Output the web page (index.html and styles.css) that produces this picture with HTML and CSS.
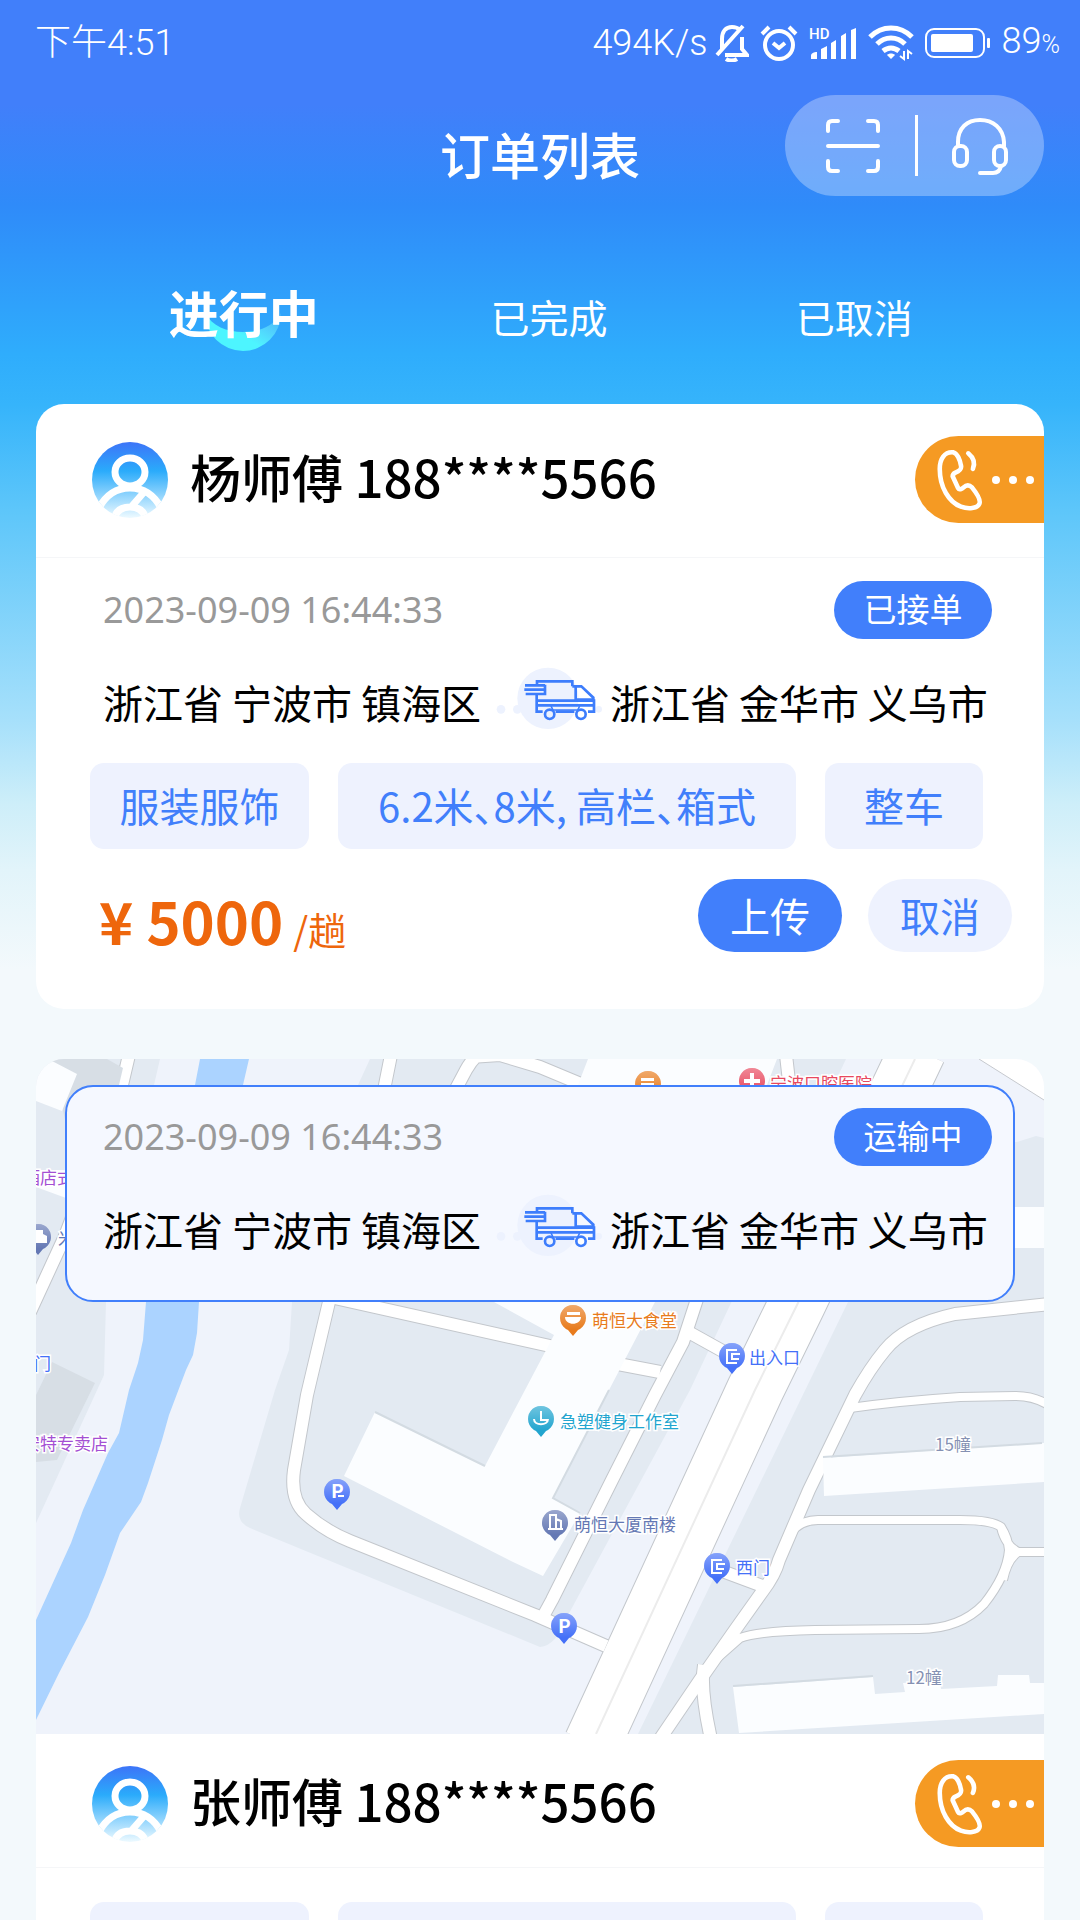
FILE: index.html
```html
<!DOCTYPE html>
<html lang="zh-CN">

<head>
  <meta charset="UTF-8">
  <meta name="viewport" content="width=device-width, initial-scale=1.0">
  <title>订单列表</title>
  <link rel="stylesheet" href="styles.css">
</head>

<body>
  <!-- shared icons -->
  <svg class="sprite" aria-hidden="true">
    <defs>
      <linearGradient id="avatar-fill" x1="0" y1="0" x2="0" y2="1">
        <stop offset="0" stop-color="#3d74f8"/>
        <stop offset=".38" stop-color="#2aabfb"/>
        <stop offset="1" stop-color="#eefaff"/>
      </linearGradient>
      <linearGradient id="pin-shine" x1="0" y1="0" x2="0" y2="1">
        <stop offset="0" stop-color="#fff" stop-opacity=".35"/>
        <stop offset=".8" stop-color="#fff" stop-opacity="0"/>
      </linearGradient>
      <clipPath id="avatar-clip"><circle cx="38" cy="38" r="38"/></clipPath>
    </defs>
    <symbol id="icon-avatar" viewBox="0 0 76 76">
      <circle cx="38" cy="38" r="38" fill="url(#avatar-fill)"/>
      <g fill="none" stroke="#fff" stroke-width="7" clip-path="url(#avatar-clip)">
        <ellipse cx="38" cy="30" rx="15" ry="14"/>
        <path d="M7 66C15 51 26 46 38 46s23 5 31 20"/>
        <path d="M53 49L40 64M22 82c0-12 6-17 16-17s16 5 16 17"/>
      </g>
    </symbol>
    <symbol id="icon-phone" viewBox="0 0 50 66">
      <g fill="none" stroke="#fff" stroke-width="5" stroke-linecap="round" stroke-linejoin="round">
        <path d="M18 3C8 2 3 10 3 21c0 20 10 36 23 41 8 3 18 2 20-3 2-4-4-13-8-18-3-3-6-3-9 0-2 2-5 3-6 1l-6-13c0-2 1-3 3-4 5-2 7-4 6-8-1-6-4-13-8-14z"/>
        <path d="M34 4c6 5 8 10 5 17"/>
      </g>
    </symbol>
    <symbol id="icon-truck" viewBox="33 36 324 186">
      <g fill="#edf2fe">
        <circle cx="189" cy="130" r="92"/>
        <circle cx="48" cy="163" r="13"/>
        <circle cx="97" cy="163" r="13"/>
        <circle cx="341" cy="163" r="10"/>
      </g>
      <g fill="none" stroke="#3d7dfc" stroke-width="8">
        <path d="M156 92V79h106v15M155 118v52h18M212 170h56M309 170h18v-37M155 137h172M155 151h172"/>
        <path d="M198 153l6 12h74l6-12" stroke-width="5"/>
        <path d="M262 94h27l36 34v6h-53V97"/>
        <path d="M120 91h60M118 104h64M122 117h58v-28"/>
        <circle cx="194" cy="178" r="14" fill="#edf2fe"/>
        <circle cx="288" cy="178" r="14" fill="#fff"/>
      </g>
    </symbol>
    <symbol id="pin" viewBox="-14 -14 28 34" overflow="visible">
      <path d="M0 18l-5-6A13 13 0 1 1 5 12z" fill="currentColor"/>
      <path d="M0 18l-5-6A13 13 0 1 1 5 12z" fill="url(#pin-shine)"/>
    </symbol>
  </svg>

  <div class="page">
    <div class="status-bar">
      <span>下午4:51</span>
      <div class="status-icons">
        <span>494K/s</span>
        <svg class="mute" width="34" height="38" viewBox="0 0 34 38" fill="none" stroke="#fff" stroke-width="4">
          <path d="M2 31L28 2M7 25V15C7 7 11 3 17 3c3 0 6 1 8 3M27 13v12l5 6H10"/>
          <path d="M11 35c3 2 8 2 11 0"/>
        </svg>
        <svg width="38" height="36" viewBox="0 0 38 36" fill="none" stroke="#fff" stroke-width="4">
          <circle cx="19" cy="20" r="14"/>
          <path d="M13 18l6 5 6-5M2 9l7-7M36 9l-7-7"/>
        </svg>
        <svg width="48" height="34" viewBox="0 0 48 34" fill="#fff">
          <text x="0" y="13" class="hd">HD</text>
          <path d="M2 33v-3c0-3 3-4 6-4v7zM12 33V23l6-3v13zM22 33V17l5-3v19zM32 33V10l5-3v26zM42 33V4l5-2v31z"/>
        </svg>
        <svg width="46" height="36" viewBox="0 0 46 36" fill="none" stroke="#fff" stroke-width="5">
          <path d="M2 12c12-12 30-12 42 0M9 19c8-8 20-8 28 0M15 26c5-4 11-4 16 0"/>
          <path d="M23 34l-4-4c2-2 6-2 8 0z" fill="#fff" stroke="none"/>
          <path d="M36 26v8l-4-3M40 34v-8l4 3" stroke-width="2"/>
        </svg>
        <svg width="66" height="30" viewBox="0 0 66 30">
          <rect x="1" y="1" width="58" height="28" rx="8" fill="none" stroke="#fff" stroke-width="2"/>
          <rect x="6" y="6" width="42" height="18" rx="2" fill="#fff"/>
          <rect x="62" y="10" width="3" height="10" rx="1" fill="#fff"/>
        </svg>
        <span>89<small>%</small></span>
      </div>
    </div>

    <header class="nav">
      <h1>订单列表</h1>
      <div class="nav-actions">
        <button type="button" aria-label="扫一扫">
          <svg width="54" height="54" viewBox="0 0 54 54" fill="none" stroke="#fff" stroke-width="4" stroke-linecap="round">
            <path d="M2 12V6q0-4 4-4h6M42 2h6q4 0 4 4v6M2 42v6q0 4 4 4h6M42 52h6q4 0 4-4v-6M2 27h50"/>
          </svg>
        </button>
        <span class="nav-divider"></span>
        <button type="button" aria-label="客服">
          <svg width="56" height="58" viewBox="0 0 56 58" fill="none" stroke="#fff" stroke-width="4" stroke-linecap="round">
            <path d="M6 29v-4C6 11 15 3 28 3s23 8 24 22v4"/>
            <rect x="2" y="29" width="13" height="20" rx="6"/>
            <rect x="42" y="29" width="12" height="20" rx="6"/>
            <path d="M49 49c-1 5-4 7-8 7H28"/>
          </svg>
        </button>
      </div>
    </header>

    <nav class="tabs">
      <button type="button" class="tab active">
        <svg class="tab-mark" viewBox="0 0 80 48">
          <defs>
            <linearGradient id="mark" x1="0" y1=".8" x2="1" y2="0">
              <stop offset=".4" stop-color="#4df5ff"/>
              <stop offset="1" stop-color="#7fe0fa" stop-opacity=".2"/>
            </linearGradient>
          </defs>
          <path d="M2 9A38 38 0 0 0 78 9C71 22 56 28 40 28S9 22 2 9z" fill="url(#mark)"/>
        </svg>
        <span>进行中</span>
      </button>
      <button type="button" class="tab">已完成</button>
      <button type="button" class="tab">已取消</button>
    </nav>

    <main class="orders">
      <article class="order">
        <div class="order-head">
          <svg class="avatar"><use href="#icon-avatar"/></svg>
          <h2>杨师傅 188****5566</h2>
          <button type="button" class="call" aria-label="拨打电话">
            <svg class="call-icon"><use href="#icon-phone"/></svg>
            <i></i><i></i><i></i>
          </button>
        </div>
        <div class="trip">
          <div class="trip-top">
            <time>2023-09-09 16:44:33</time>
            <span class="badge">已接单</span>
          </div>
          <div class="route">
            <span>浙江省 宁波市 镇海区</span>
            <svg class="truck"><use href="#icon-truck"/></svg>
            <span>浙江省 金华市 义乌市</span>
          </div>
        </div>
        <div class="tags">
          <span>服装服饰</span>
          <span>6.2米、8米, 高栏、箱式</span>
          <span>整车</span>
        </div>
        <div class="order-foot">
          <p class="price"><b>¥ 5000</b><span>/趟</span></p>
          <button type="button" class="btn primary">上传</button>
          <button type="button" class="btn">取消</button>
        </div>
      </article>

      <article class="order order-map">
        <div class="map-wrap">
          <svg class="map" viewBox="36 1059 1008 675" role="img" aria-label="运输地图">
            <defs>
              <g id="roads" class="roads">
                <path class="lane-12" d="M129 1055L122 1085 65 1236 30 1312"/>
                <path class="lane-12" d="M391 1055L384 1090M495 1040Q474 1055 466 1070L450 1100M470 1057L500 1055 540 1067 600 1092"/>
                <path class="lane-12" d="M333 1285L307 1395 294 1470Q290 1500 306 1514 325 1531 350 1541L535 1615 606 1646"/>
                <path class="lane-12" d="M330 1297L550 1346M618 1364L660 1372"/>
                <path class="lane-12" d="M700 1290L683 1342 655 1395 612 1480 552 1600 540 1622"/>
                <path class="lane-12" d="M683 1329L728 1354M786 1055L790 1090"/>
                <path class="lane-12" d="M1050 1304L955 1314Q905 1325 885 1350 870 1368 855 1395L809 1490 779 1560Q775 1575 762 1592L735 1630 700 1680 660 1739"/>
                <path class="lane-12" d="M704 1665Q700 1690 711 1739M722 1571L765 1587"/>
                <path class="lane-8" d="M850 1408Q900 1401 960 1397L1015 1396Q1035 1396 1050 1406"/>
                <path class="lane-8" d="M790 1534Q800 1520 818 1520H960Q992 1520 1001 1527 1008 1538 1009 1550 1007 1575 984 1604 960 1629 919 1629L815 1630Q760 1631 740 1638L706 1668M1001 1527Q1005 1545 1018 1552H1050M1018 1552Q1007 1560 1003 1580"/>
                <path class="lane-56" d="M918 1050L798 1302 755 1390 592 1744"/>
              </g>
            </defs>

            <rect class="land" x="36" y="1059" width="1008" height="675"/>

            <!-- blocks -->
            <g class="block">
              <path d="M36 1059H160L154 1085 106 1302 104 1375 36 1523z"/>
              <path d="M370 1059H846L690 1390 567 1617Q556 1646 540 1647L250 1528Q236 1522 240 1508L275 1390 289 1350 292 1302 358 1085z"/>
              <path d="M926 1142H1017L1036 1136 1044 1138V1734H638L848 1302z"/>
            </g>
            <path class="river" d="M200 1059H249L243 1085 199 1302 197 1333 193 1355 186 1370 169 1415 162 1440 148 1483 141 1502 120 1533 105 1575 88 1617 59 1673 36 1720V1620L71 1543 83 1510 108 1453 119 1433 129 1390 138 1363 143 1340 146 1302 195 1085z"/>

            <!-- roads: grey casing first, white fill on top -->
            <use href="#roads" class="road-casing"/>
            <use href="#roads" class="road-fill"/>
            <path class="centre-line" d="M915 1059L797 1305 755 1390 596 1734"/>
            <path class="verge" d="M979 1059L1044 1100V1059z"/>
            <path class="outline" d="M979 1059L1044 1100"/>

            <!-- buildings -->
            <g class="building-dark">
              <path d="M52 1059H107L123 1068 119 1085 65 1120z"/>
              <path d="M52 1362L95 1383 57 1460 36 1462V1395z"/>
            </g>
            <g class="building">
              <path d="M36 1060L52 1061 77 1074 62 1111 36 1101z"/>
              <path d="M588 1059H777L767 1085 655 1302 609 1390 553 1498 580 1513 543 1576 513 1562 344 1476 375 1412 485 1466 525 1390 554 1335 494 1302z"/>
              <path d="M823 1458L1044 1443V1482L824 1496z"/>
              <path d="M733 1687L873 1677 875 1694 905 1692 903 1683 940 1681 941 1689 997 1686 998 1675 1029 1675 1030 1683H1044V1714L739 1733z"/>
              <path d="M1010 1207H1044V1248H1010z"/>
              <path d="M36 1170H66V1198L36 1187z"/>
            </g>
            <path class="shade" d="M375 1412L485 1466M609 1390L553 1498 580 1513M823 1457L1042 1443M733 1686L873 1676"/>

            <!-- points of interest -->
            <g class="poi purple">
              <text x="23" y="1184">酒店式</text>
              <text x="23" y="1450">安特专卖店</text>
            </g>
            <g class="poi slate">
              <use href="#pin" x="24" y="1223" width="28" height="34"/>
              <path class="glyph" d="M32 1243v-7l4-2v-4h7v4l4 2v7z"/>
              <text x="58" y="1245">米</text>
              <use href="#pin" x="541" y="1509" width="28" height="34"/>
              <path class="glyph-line" d="M550 1529v-14h6v14M556 1519l5 2v8M548 1529h15"/>
              <text x="574" y="1531">萌恒大厦南楼</text>
            </g>
            <g class="poi orange">
              <use href="#pin" x="634" y="1070" width="28" height="34"/>
              <path class="glyph" d="M641 1078h13v3h-13zM641 1083h13v2h-13z"/>
              <use href="#pin" x="559" y="1304" width="28" height="34"/>
              <path class="glyph" d="M567 1312h13v3h-13zM565 1317h16c0 9-16 9-16 0z"/>
              <text x="592" y="1327">萌恒大食堂</text>
            </g>
            <g class="poi red">
              <use href="#pin" x="738" y="1067" width="28" height="34"/>
              <path class="glyph" d="M750 1073h4v6h6v4h-6v6h-4v-6h-6v-4h6z"/>
              <text x="770" y="1090">宁波口腔医院</text>
            </g>
            <g class="poi cyan">
              <use href="#pin" x="527" y="1405" width="28" height="34"/>
              <path class="glyph-line" d="M534 1419c0 7 14 7 14 0M541 1411v9h6"/>
              <text x="560" y="1428">急塑健身工作室</text>
            </g>
            <g class="poi blue">
              <use href="#pin" x="718" y="1342" width="28" height="34"/>
              <path class="glyph-line" d="M737 1350h-10v13h10M740 1354h-8v5h7"/>
              <text x="749" y="1364">出入口</text>
              <use href="#pin" x="703" y="1552" width="28" height="34"/>
              <path class="glyph-line" d="M722 1560h-10v13h10M725 1564h-8v5h7"/>
              <text x="736" y="1574">西门</text>
              <use href="#pin" x="323" y="1478" width="28" height="34"/>
              <text class="pin-letter" x="331" y="1498">P</text>
              <path class="glyph-line" d="M338 1496h6"/>
              <use href="#pin" x="550" y="1612" width="28" height="34"/>
              <text class="pin-letter" x="558" y="1633">P</text>
              <text x="17" y="1370">东门</text>
            </g>
            <g class="poi grey">
              <text x="935" y="1451">15幢</text>
              <text x="906" y="1684">12幢</text>
            </g>
          </svg>

          <div class="trip trip-panel">
            <div class="trip-top">
              <time>2023-09-09 16:44:33</time>
              <span class="badge">运输中</span>
            </div>
            <div class="route">
              <span>浙江省 宁波市 镇海区</span>
              <svg class="truck"><use href="#icon-truck"/></svg>
              <span>浙江省 金华市 义乌市</span>
            </div>
          </div>
        </div>

        <div class="order-head">
          <svg class="avatar"><use href="#icon-avatar"/></svg>
          <h2>张师傅 188****5566</h2>
          <button type="button" class="call" aria-label="拨打电话">
            <svg class="call-icon"><use href="#icon-phone"/></svg>
            <i></i><i></i><i></i>
          </button>
        </div>
        <div class="tags">
          <span>服装服饰</span>
          <span>6.2米、8米, 高栏、箱式</span>
          <span>整车</span>
        </div>
      </article>
    </main>
  </div>
</body>

</html>
```
FILE: styles.css
```css
* {
  margin: 0;
  padding: 0;
  box-sizing: border-box;
}

body {
  font-family: "Noto Sans CJK SC", sans-serif;
  background: #f3f9fc;
  color: #000;
}

button {
  font-family: inherit;
  border: 0;
  background: transparent;
  cursor: pointer;
}

svg {
  display: block;
  flex: none;
}

.sprite {
  position: absolute;
  width: 0;
  height: 0;
}

.page {
  height: 100vh;
  overflow-y: auto;
  scrollbar-width: none;
  background: linear-gradient(#417ffa 0, #417ffa 105px, #2f8bf9 205px, #2fadfc 355px, #36b4fb 405px, #5dc6fa 510px, #a6e0fb 720px, #cdeef9 803px, #e2f4fa 870px, #f3f9fc 970px);
}

/* status bar */
.status-bar {
  height: 82px;
  padding: 3px 20px 0 35px;
  display: flex;
  justify-content: space-between;
  align-items: center;
  color: #fff;
  font-family: Roboto, "Noto Sans CJK SC", sans-serif;
  font-weight: 300;
  font-size: 36px;
  line-height: 40px;
}

.status-bar > span {
  height: 40px;
}

.status-icons {
  display: flex;
  align-items: center;
  gap: 11px;
}

.status-icons .mute {
  margin-left: -4px;
}

.status-icons small {
  font-size: 25px;
}

.hd {
  font-size: 15px;
  font-weight: 500;
}

/* title */
.nav {
  display: grid;
  grid-template-columns: 1fr auto 1fr;
  align-items: center;
  padding: 13px 36px 0;
  color: #fff;
}

.nav h1 {
  grid-column: 2;
  font-size: 50px;
  font-weight: 500;
  line-height: 80px;
  padding-top: 14px;
}

.nav-actions {
  justify-self: end;
  width: 259px;
  height: 101px;
  padding: 0 36px 0 41px;
  display: flex;
  align-items: center;
  justify-content: space-between;
  background: rgba(255, 255, 255, .3);
  border-radius: 51px;
}

.nav-divider {
  width: 3px;
  height: 61px;
  background: #fff;
}

/* tabs */
.tabs {
  display: grid;
  grid-template-columns: repeat(3, 1fr);
  align-items: baseline;
  padding: 79px 73px 52px 91px;
}

.tab {
  color: #fff;
  font-size: 39px;
  line-height: 72px;
}

.tab.active {
  position: relative;
  font-size: 50px;
  font-weight: 700;
}

.tab.active span {
  position: relative;
}

.tab-mark {
  position: absolute;
  left: 50%;
  bottom: -5px;
  width: 80px;
  height: 48px;
  margin-left: -41px;
}

/* orders */
.orders {
  display: flex;
  flex-direction: column;
  gap: 50px;
  padding: 0 36px 50px;
}

.order {
  background: #fff;
  border-radius: 28px;
  overflow: hidden;
  padding-bottom: 49px;
}

.order-head {
  display: flex;
  align-items: center;
  padding: 32px 0 34px 56px;
  border-bottom: 1px solid #f5f6f8;
}

.order-map .order-head {
  padding: 26px 0 20px 56px;
}

.avatar {
  width: 76px;
  height: 76px;
}

.order-head h2 {
  flex: 1;
  margin-left: 22px;
  padding-bottom: 8px;
  font-size: 51px;
  font-weight: 500;
  line-height: 68px;
}

.call {
  width: 129px;
  height: 87px;
  padding-left: 22px;
  display: flex;
  align-items: center;
  gap: 9px;
  background: #f59a23;
  border-radius: 44px 0 0 44px;
}

.call-icon {
  width: 46px;
  height: 64px;
}

.call i {
  width: 8px;
  height: 8px;
  border-radius: 50%;
  background: #fff;
}

.trip {
  padding: 23px 52px 0 67px;
}

.trip-top {
  display: flex;
  justify-content: space-between;
  align-items: center;
}

.trip-top time {
  color: #999;
  font-family: "Noto Sans", sans-serif;
  font-size: 36px;
  line-height: 58px;
}

.badge {
  width: 158px;
  height: 58px;
  border-radius: 29px;
  background: #417ffb;
  color: #fff;
  font-size: 33px;
  line-height: 54px;
  text-align: center;
}

.route {
  display: flex;
  align-items: flex-end;
  margin-top: 28px;
  font-size: 40px;
  line-height: 54px;
  white-space: nowrap;
}

.truck {
  width: 108px;
  height: 62px;
  margin: 0 6px 0 15px;
}

.tags {
  display: grid;
  grid-template-columns: 219fr 458fr 158fr;
  gap: 29px;
  padding: 34px 61px 0 54px;
}

.tags span {
  height: 86px;
  border-radius: 14px;
  background: #eef2fe;
  color: #417ffb;
  font-size: 40px;
  line-height: 84px;
  text-align: center;
  white-space: nowrap;
  font-feature-settings: "halt";
}

.order-foot {
  display: flex;
  align-items: flex-start;
  gap: 26px;
  padding: 30px 32px 0 63px;
}

.price {
  flex: 1;
  display: flex;
  align-items: baseline;
  gap: 10px;
  height: 81px;
  padding-top: 5px;
  color: #ee660c;
  font-size: 38px;
  line-height: 73px;
}

.price b {
  font-size: 58px;
  font-weight: 700;
}

.btn {
  width: 144px;
  height: 73px;
  border-radius: 37px;
  background: #eef2fe;
  color: #417ffb;
  font-size: 40px;
  line-height: 71px;
}

.btn.primary {
  background: #417ffb;
  color: #fff;
}

/* map card */
.map-wrap {
  position: relative;
}

.map {
  width: 100%;
  height: auto;
}

.trip-panel {
  position: absolute;
  top: 26px;
  left: 29px;
  right: 29px;
  padding: 21px 21px 44px 36px;
  background: #f5f8ff;
  border: 2px solid #417ffb;
  border-radius: 28px;
}

.land {
  fill: #eff3fb;
}

.block {
  fill: #e3eaf2;
}

.river {
  fill: #abd3ff;
}

.building {
  fill: #fbfdff;
}

.building-dark {
  fill: #d7dee5;
}

.verge {
  fill: #fff;
}

.shade {
  fill: none;
  stroke: #d3dbe2;
  stroke-width: 2;
}

.outline {
  fill: none;
  stroke: #c6c9ce;
}

.centre-line {
  fill: none;
  stroke: #ececec;
  stroke-width: 2;
}

.road-casing {
  --road-color: #c3c7cc;
  --casing: 2px;
}

.road-fill {
  --road-color: #fff;
  --casing: 0px;
}

.roads path {
  fill: none;
  stroke: var(--road-color);
  stroke-width: calc(var(--lane) + var(--casing));
  stroke-linejoin: round;
}

.lane-8 {
  --lane: 8px;
}

.lane-12 {
  --lane: 12px;
}

.lane-56 {
  --lane: 56px;
}

.poi text {
  font-size: 17px;
  fill: currentColor;
  stroke: #fff;
  stroke-width: 3;
  paint-order: stroke;
}

.poi .pin-letter {
  font-size: 19px;
  font-weight: 700;
  fill: #fff;
  stroke: none;
}

.glyph {
  fill: #fff;
}

.glyph-line {
  fill: none;
  stroke: #fff;
  stroke-width: 2;
}

.purple { color: #a44fd3; }
.slate { color: #6478b4; }
.orange { color: #e87b1c; }
.red { color: #e8485e; }
.cyan { color: #22a5cf; }
.blue { color: #4470f8; }
.grey { color: #8591b3; }
```
